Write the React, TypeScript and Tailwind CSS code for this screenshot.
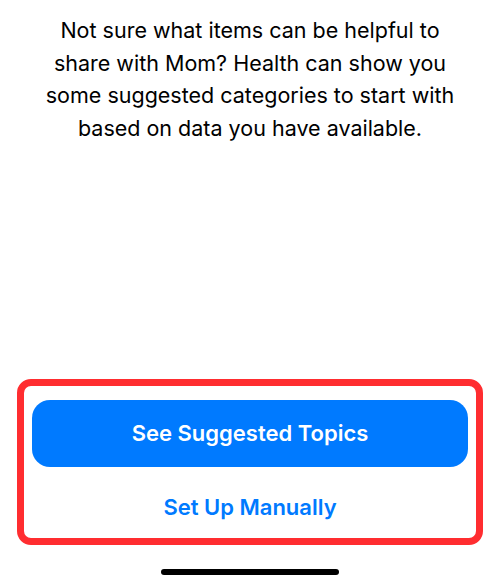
const font = { fontFamily: 'Inter, "Noto Sans", sans-serif' };

function SuggestionIntro() {
  return (
    <p className="pt-[14px] text-center text-[21.5px] leading-[32.6px] text-black">
      Not sure what items can be helpful to
      <br />
      share with Mom? Health can show you
      <br />
      some suggested categories to start with
      <br />
      based on data you have available.
    </p>
  );
}

function ActionGroup() {
  return (
    <div className="mx-[17px] flex h-[166px] flex-col rounded-[14px] border-[7px] border-[#ff2d30]">
      <button className="mx-[8px] mt-[14px] h-[67px] rounded-[18px] bg-[#007aff] text-[22px] font-semibold text-white">
        See Suggested Topics
      </button>
      <button className="mt-[24px] text-[22px] font-semibold text-[#007aff]">Set Up Manually</button>
    </div>
  );
}

export default function App() {
  return (
    <div className="flex h-[587px] w-[500px] flex-col bg-white" style={font}>
      <SuggestionIntro />
      <div className="flex-1" />
      <ActionGroup />
      {/* home indicator */}
      <div className="flex justify-center pt-[24px] pb-[12px]">
        <div className="h-[6px] w-[178px] rounded-full bg-black" />
      </div>
    </div>
  );
}
